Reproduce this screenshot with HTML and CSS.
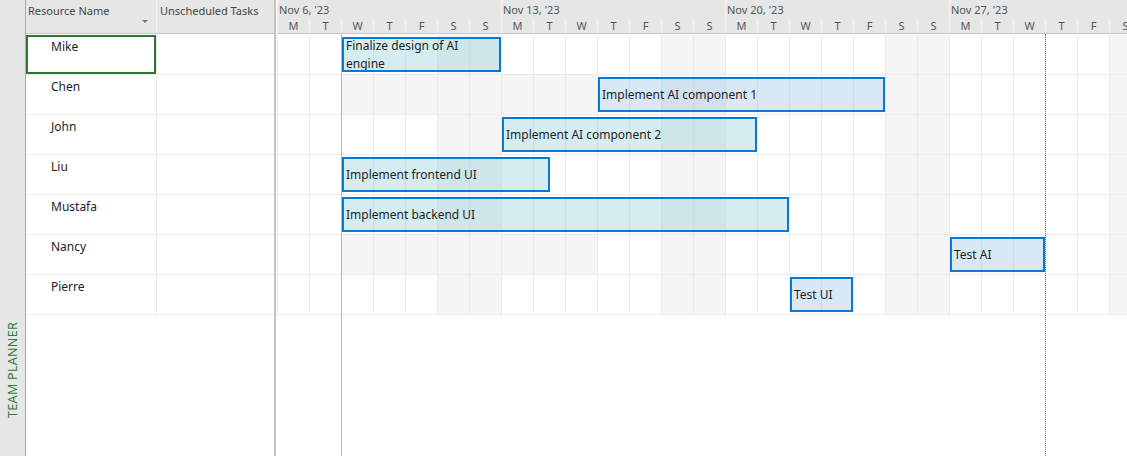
FILE: index.html
```
<html>
<head>
  <meta name="viewport" content="width=device-width, initial-scale=1.0">
  <link rel="stylesheet" href="styles.css">
</head>
<body>
  <div class="app">

    <!-- view bar on the left -->
    <aside class="view-bar">
      <span class="view-bar-label">TEAM PLANNER</span>
    </aside>

    <!-- resource sheet -->
    <div class="sheet">
      <div class="sheet-head">
        <div class="col-name">Resource Name <span class="sort-arrow"></span></div>
        <div class="col-unsched">Unscheduled Tasks</div>
      </div>
      <div class="sheet-rows">
        <div class="sheet-row"><div class="cell-name is-selected">Mike</div><div class="cell-unsched"></div></div>
        <div class="sheet-row"><div class="cell-name">Chen</div><div class="cell-unsched"></div></div>
        <div class="sheet-row"><div class="cell-name">John</div><div class="cell-unsched"></div></div>
        <div class="sheet-row"><div class="cell-name">Liu</div><div class="cell-unsched"></div></div>
        <div class="sheet-row"><div class="cell-name">Mustafa</div><div class="cell-unsched"></div></div>
        <div class="sheet-row"><div class="cell-name">Nancy</div><div class="cell-unsched"></div></div>
        <div class="sheet-row"><div class="cell-name">Pierre</div><div class="cell-unsched"></div></div>
      </div>
    </div>

    <div class="splitter"></div>

    <!-- chart: 1 day = 32px, starts Mon Nov 6 -->
    <div class="chart">
      <div class="timescale">
        <div class="weeks">
          <div class="week">Nov 6, '23</div>
          <div class="week">Nov 13, '23</div>
          <div class="week">Nov 20, '23</div>
          <div class="week">Nov 27, '23</div>
        </div>
        <div class="days">
          <div class="day">M</div><div class="day">T</div><div class="day">W</div><div class="day">T</div><div class="day">F</div><div class="day">S</div><div class="day">S</div>
          <div class="day">M</div><div class="day">T</div><div class="day">W</div><div class="day">T</div><div class="day">F</div><div class="day">S</div><div class="day">S</div>
          <div class="day">M</div><div class="day">T</div><div class="day">W</div><div class="day">T</div><div class="day">F</div><div class="day">S</div><div class="day">S</div>
          <div class="day">M</div><div class="day">T</div><div class="day">W</div><div class="day">T</div><div class="day">F</div><div class="day">S</div>
        </div>
      </div>

      <div class="lanes">
        <!-- Mike -->
        <div class="lane">
          <div class="task task-teal" style="left:65px; width:159px;">Finalize design of AI<br>engine</div>
        </div>
        <!-- Chen -->
        <div class="lane">
          <div class="nonwork" style="left:64px; width:256px;"></div>
          <div class="task task-blue" style="left:321px; width:287px;">Implement AI component 1</div>
        </div>
        <!-- John -->
        <div class="lane">
          <div class="task task-teal" style="left:225px; width:255px;">Implement AI component 2</div>
        </div>
        <!-- Liu -->
        <div class="lane">
          <div class="task task-teal" style="left:65px; width:208px;">Implement frontend UI</div>
        </div>
        <!-- Mustafa -->
        <div class="lane">
          <div class="task task-teal" style="left:65px; width:447px;">Implement backend UI</div>
        </div>
        <!-- Nancy -->
        <div class="lane">
          <div class="nonwork" style="left:64px; width:256px;"></div>
          <div class="task task-blue" style="left:673px; width:95px;">Test AI</div>
        </div>
        <!-- Pierre -->
        <div class="lane">
          <div class="task task-blue" style="left:513px; width:63px;">Test UI</div>
        </div>
      </div>

      <div class="today-line"></div>
      <div class="status-line"></div>
    </div>

  </div>
</body>
</html>
```

FILE: styles.css
```
body {
  margin: 0;
  font-family: "Noto Sans", "Segoe UI", sans-serif;
  font-size: 12px;
  color: #1e1e1e;
  background: #fff;
}

.app {
  display: flex;
  width: 1127px;
  height: 456px;
  overflow: hidden;
}

/* left view bar */
.view-bar {
  width: 26px;
  flex: none;
  box-sizing: border-box;
  background: #e6e6e6;
  border-right: 1px solid #a8a8a8;
  display: flex;
  flex-direction: column;
  align-items: center;
  padding-top: 322px;
}
.view-bar-label {
  writing-mode: vertical-rl;
  transform: rotate(180deg);
  color: #2f7d32;
  font-size: 12.5px;
  letter-spacing: 0.3px;
}

/* resource sheet */
.sheet {
  width: 248px;
  flex: none;
}
.sheet-head {
  display: flex;
  height: 34px;
  box-sizing: border-box;
  background: #e6e6e6;
  border-bottom: 1px solid #c6c6c6;
  color: #444;
  font-size: 11px;
  line-height: 16px;
}
.col-name {
  width: 131px;
  box-sizing: border-box;
  border-right: 1px solid #f2f2f2;
  padding: 3px 0 0 2px;
  display: flex;
  justify-content: space-between;
}
.sort-arrow {
  margin: 17px 8px 0 0;
  width: 0;
  height: 0;
  border-left: 3px solid transparent;
  border-right: 3px solid transparent;
  border-top: 3px solid #777;
}
.col-unsched {
  flex: 1;
  padding: 3px 0 0 3px;
}
.sheet-rows {
  padding-top: 1px;
}
.sheet-row {
  display: flex;
  height: 40px;
  box-sizing: border-box;
  border-bottom: 1px solid #ebebeb;
}
.cell-name {
  width: 131px;
  box-sizing: border-box;
  border-right: 1px solid #ebebeb;
  padding: 4px 0 0 25px;
  line-height: 16px;
}
.cell-name.is-selected {
  box-shadow: inset 0 0 0 2px #2e7531;
}
.cell-unsched {
  flex: 1;
}

.splitter {
  width: 3px;
  flex: none;
  background: linear-gradient(to right, #c3c3c3 0 2px, #fff 2px);
}

/* chart */
.chart {
  flex: 1;
  position: relative;
  overflow: hidden;
}
.timescale {
  height: 34px;
  box-sizing: border-box;
  background: #e6e6e6;
  border-bottom: 1px solid #c6c6c6;
  color: #555;
  font-size: 11px;
}
.weeks, .days {
  display: flex;
}
.week {
  width: 224px;
  flex: none;
  box-sizing: border-box;
  border-left: 1px solid #f3f3f3;
  padding-left: 1px;
  height: 20px;
  line-height: 20px;
}
.day {
  width: 32px;
  flex: none;
  box-sizing: border-box;
  border-left: 1px solid #f3f3f3;
  height: 13px;
  line-height: 12px;
  text-align: center;
}

.lanes {
  padding-top: 1px;
}
.lane {
  position: relative;
  height: 40px;
  box-sizing: border-box;
  border-bottom: 1px solid #ebebeb;
  background:
    repeating-linear-gradient(to right, #ebebeb 0 1px, transparent 1px 32px),
    repeating-linear-gradient(to right, transparent 0 160px, #f5f5f5 160px 224px);
}
.nonwork {
  position: absolute;
  top: 0;
  bottom: 0;
  background: repeating-linear-gradient(to right, #ebebeb 0 1px, #f5f5f5 1px 32px);
}
.task {
  position: absolute;
  top: 2px;
  height: 35px;
  box-sizing: border-box;
  border: 2px solid #0a78d4;
  padding: 0 2px;
  display: flex;
  align-items: center;
  line-height: 18px;
  white-space: nowrap;
  overflow: hidden;
}
.task-teal {
  background: rgba(135, 204, 215, 0.35);
}
.task-blue {
  background: rgba(146, 189, 229, 0.35);
}

.today-line {
  position: absolute;
  top: 34px;
  bottom: 0;
  left: 64px;
  width: 1px;
  background: #9ec99b;
}
.status-line {
  position: absolute;
  top: 34px;
  bottom: 0;
  left: 768px;
  border-left: 1px dotted #777;
}
```
